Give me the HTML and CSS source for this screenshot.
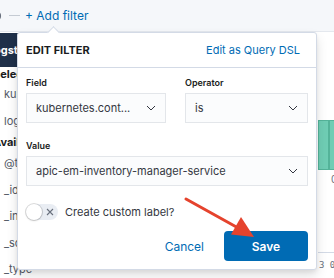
FILE: index.html
```html
<!DOCTYPE html>
<html>
<head>
    <title>Edit filter</title>
    <link rel="stylesheet" href="styles.css">
</head>
<body>
    <div class="topbar">
        <svg class="gear" width="12" height="12" viewBox="0 0 12 12">
            <circle cx="6" cy="6" r="3.5" fill="none" stroke="#69707d" stroke-width="1.2"/>
            <circle cx="6" cy="6" r="1.3" fill="#69707d"/>
        </svg>
        <span class="dash"></span>
        <span class="add-filter">+ Add filter</span>
    </div>

    <div class="main">
        <div class="sidebar">
            <div class="index-pattern">logstash-*</div>
            <div class="section-title first">Selected fields</div>
            <div class="field">kubernetes.container_name</div>
            <div class="field">log</div>
            <div class="section-title">Available fields</div>
            <div class="field">@timestamp</div>
            <div class="field">_id</div>
            <div class="field">_index</div>
            <div class="field">_score</div>
            <div class="field">_type</div>
        </div>
        <div class="content">
            <div class="chart">
                <div class="bar wide"></div>
                <div class="bar"></div>
            </div>
            <div class="axis-label">0</div>
            <div class="doc-row">3 09:42</div>
        </div>
    </div>

    <!-- Edit filter popover -->
    <div class="popover">
        <div class="popover-header">
            <span class="popover-title">EDIT FILTER</span>
            <span class="link">Edit as Query DSL</span>
        </div>
        <div class="popover-body">
            <div class="form-row">
                <div class="form-field field-name">
                    <div class="form-label">Field</div>
                    <div class="select">
                        <span>kubernetes.cont...</span>
                        <svg width="10" height="6" viewBox="0 0 10 6"><polyline points="1,1 5,5 9,1" fill="none" stroke="#343741" stroke-width="1"/></svg>
                    </div>
                </div>
                <div class="form-field field-operator">
                    <div class="form-label">Operator</div>
                    <div class="select">
                        <span>is</span>
                        <svg width="10" height="6" viewBox="0 0 10 6"><polyline points="1,1 5,5 9,1" fill="none" stroke="#343741" stroke-width="1"/></svg>
                    </div>
                </div>
            </div>

            <div class="form-field value-field">
                <div class="form-label">Value</div>
                <div class="select">
                    <span>apic-em-inventory-manager-service</span>
                    <svg width="10" height="6" viewBox="0 0 10 6"><polyline points="1,1 5,5 9,1" fill="none" stroke="#343741" stroke-width="1"/></svg>
                </div>
            </div>

            <div class="switch-row">
                <span class="switch">
                    <span class="knob"></span>
                    <svg class="switch-x" width="8" height="8" viewBox="0 0 8 8"><path d="M1 1L7 7M7 1L1 7" stroke="#69707d" stroke-width="1.1"/></svg>
                </span>
                <span class="switch-label">Create custom label?</span>
            </div>

            <div class="popover-footer">
                <span class="btn-empty">Cancel</span>
                <span class="btn-save">Save</span>
            </div>
        </div>
    </div>

    <!-- annotation arrow -->
    <svg class="annotation" width="334" height="278" viewBox="0 0 334 278">
        <line x1="186" y1="199" x2="240" y2="229" stroke="#e5432d" stroke-width="3" stroke-linecap="round"/>
        <polygon points="254,237 231,234.5 241,217" fill="#e5432d"/>
    </svg>
</body>
</html>
```

FILE: styles.css
```css
body {
    margin: 0;
    width: 334px;
    height: 278px;
    overflow: hidden;
    position: relative;
    font-family: Inter, "Noto Sans", sans-serif;
    color: #343741;
    background: #fff;
}

.topbar {
    height: 31px;
    background: #f5f7fa;
    border-bottom: 1px solid #e4e8ee;
    display: flex;
    align-items: center;
}

.gear {
    margin-left: -9px;
}

.dash {
    width: 11px;
    height: 1px;
    background: #c5cbd3;
    margin-left: 6px;
}

.add-filter {
    margin-left: 5px;
    font-size: 12px;
    color: #006bb4;
}

.main {
    display: flex;
    justify-content: space-between;
    height: 246px;
}

.sidebar {
    width: 80px;
    margin-left: -20px;
    font-size: 11px;
    overflow: hidden;
    white-space: nowrap;
}

.index-pattern {
    margin-top: 1px;
    height: 34px;
    line-height: 34px;
    padding-left: 11px;
    background: #1f3049;
    color: #fff;
    font-weight: 700;
}

.section-title {
    height: 16px;
    line-height: 16px;
    padding-left: 13px;
    font-weight: 700;
    color: #1a1c21;
}

.section-title.first {
    height: 14px;
    line-height: 14px;
}

.field {
    height: 26.5px;
    line-height: 26.5px;
    padding-left: 24px;
    color: #535966;
}

.content {
    width: 16px;
    overflow: hidden;
    white-space: nowrap;
}

.chart {
    margin-top: 88px;
    height: 50px;
    display: flex;
    align-items: flex-end;
}

.bar {
    height: 50px;
    width: 8px;
    flex: none;
    box-sizing: border-box;
    background: #6fcdb4;
    border: 1px solid #54b399;
}

.bar.wide {
    width: 11px;
}

.axis-label {
    padding-left: 13px;
    font-size: 10px;
    line-height: 18px;
    color: #69707d;
}

.doc-row {
    margin-top: 64px;
    border-top: 1px solid #d3dae6;
    padding-left: 1px;
    height: 24px;
    line-height: 24px;
    font-family: "DejaVu Sans Mono", monospace;
    font-size: 9px;
    color: #69707d;
}

/* popover */
.popover {
    position: absolute;
    left: 17px;
    top: 32px;
    width: 300px;
    height: 238px;
    box-sizing: border-box;
    background: #fff;
    border: 1px solid #d3dae6;
    border-radius: 3px;
    box-shadow: 0 6px 12px rgba(0, 0, 0, 0.12), 0 2px 4px rgba(0, 0, 0, 0.06);
}

.popover::before {
    content: "";
    position: absolute;
    top: -5px;
    left: 31px;
    width: 8px;
    height: 8px;
    background: #fff;
    border-left: 1px solid #d3dae6;
    border-top: 1px solid #d3dae6;
    transform: rotate(45deg);
}

.popover-header {
    height: 34px;
    display: flex;
    align-items: center;
    justify-content: space-between;
    padding: 0 16px 0 8px;
    border-bottom: 1px solid #d3dae6;
}

.popover-title {
    font-size: 11px;
    font-weight: 700;
    color: #1a1c21;
}

.link {
    font-size: 11px;
    color: #006bb4;
}

.popover-body {
    padding: 9px 8px 8px;
}

.form-row {
    display: flex;
    gap: 19px;
}

.field-name {
    width: 140px;
}

.field-operator {
    flex: 1;
}

.form-label {
    height: 11px;
    line-height: 11px;
    margin-bottom: 5px;
    font-size: 9px;
    font-weight: 600;
    color: #1a1c21;
}

.select {
    height: 30px;
    box-sizing: border-box;
    display: flex;
    align-items: center;
    justify-content: space-between;
    padding: 0 9px;
    background: #fbfcfd;
    border: 1px solid #e3e6ea;
    font-size: 11px;
    color: #343741;
    white-space: nowrap;
}

.value-field {
    margin-top: 17px;
}

.switch-row {
    margin-top: 18px;
    height: 16px;
    display: flex;
    align-items: center;
}

.switch {
    width: 32px;
    height: 16px;
    border-radius: 8px;
    background: #e9edf3;
    display: flex;
    align-items: center;
}

.knob {
    width: 16px;
    height: 16px;
    border-radius: 50%;
    background: #fff;
    box-shadow: 0 0 0 1px rgba(0, 0, 0, 0.14), 0 1px 2px rgba(0, 0, 0, 0.12);
}

.switch-x {
    margin-left: 4px;
}

.switch-label {
    margin-left: 7px;
    font-size: 11px;
    color: #343741;
}

.popover-footer {
    margin-top: 11px;
    display: flex;
    justify-content: flex-end;
    align-items: center;
}

.btn-empty {
    padding: 0 12px;
    margin-right: 8px;
    font-size: 12px;
    color: #006bb4;
}

.btn-save {
    width: 84px;
    height: 30px;
    border-radius: 4px;
    background: #006bb4;
    color: #fff;
    font-size: 12px;
    font-weight: 600;
    display: flex;
    align-items: center;
    justify-content: center;
}

.annotation {
    position: absolute;
    left: 0;
    top: 0;
    pointer-events: none;
}
```
